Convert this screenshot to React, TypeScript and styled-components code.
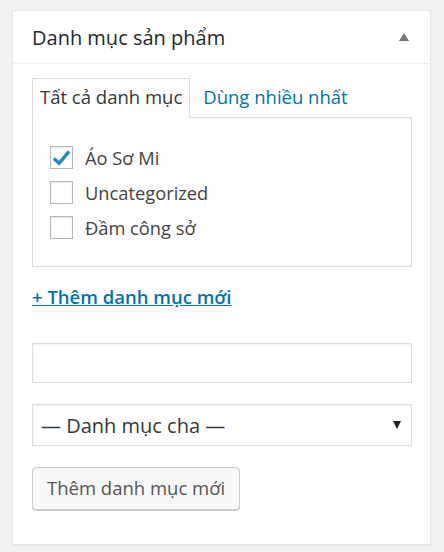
import { createGlobalStyle, styled } from "styled-components";

const GlobalStyle = createGlobalStyle`
  html, body {
    margin: 0;
    padding: 0;
    background: #f1f1f1;
  }
  body {
    font-family: "Open Sans", "Liberation Sans", sans-serif;
    color: #444;
  }
`;

const Page = styled.div`
  padding: 10px 13px 6px 12px;
`;

const Postbox = styled.div`
  background: #fff;
  border: 1px solid #e5e5e5;
  box-shadow: 0 1px 1px rgba(0, 0, 0, 0.04);
`;

const Header = styled.div`
  display: flex;
  align-items: center;
  justify-content: space-between;
  height: 52px;
  padding: 0 21px 0 19px;
  border-bottom: 1px solid #eee;
`;

const Title = styled.h2`
  margin: 0;
  font-size: 20px;
  font-weight: 400;
  color: #23282d;
`;

const Toggle = styled.span`
  width: 0;
  height: 0;
  border-left: 5px solid transparent;
  border-right: 5px solid transparent;
  border-bottom: 8px solid #72777c;
`;

const Inside = styled.div`
  padding: 14px 18px 34px 19px;
`;

const Tabs = styled.ul`
  display: flex;
  margin: 0;
  padding: 0;
  list-style: none;
`;

const Tab = styled.li<{ $active?: boolean }>`
  padding: 0 7px;
  height: 38px;
  line-height: 36px;
  font-size: 18.5px;
  margin-bottom: -1px;
  border: 1px solid ${(p) => (p.$active ? "#ddd" : "transparent")};
  border-bottom-color: ${(p) => (p.$active ? "#fdfdfd" : "transparent")};
  background: ${(p) => (p.$active ? "#fdfdfd" : "transparent")};
  color: ${(p) => (p.$active ? "#32373c" : "#0073aa")};
  position: relative;
  z-index: 1;
  & + & {
    padding-left: 12px;
  }
`;

const TabPanel = styled.div`
  border: 1px solid #ddd;
  background: #fdfdfd;
  padding: 28px 17px 27px 17px;
  display: flex;
  flex-direction: column;
  gap: 12px;
`;

const Row = styled.label`
  display: flex;
  align-items: center;
  gap: 12px;
  font-size: 18.3px;
  color: #444;
  height: 23px;
`;

const Box = styled.span`
  width: 21px;
  height: 21px;
  border: 1px solid #b4b9be;
  background: #fff;
  box-shadow: inset 0 1px 2px rgba(0, 0, 0, 0.1);
  display: flex;
  align-items: center;
  justify-content: center;
  flex-shrink: 0;
`;

const AddLink = styled.a`
  display: inline-block;
  margin-top: 17px;
  font-size: 18.5px;
  font-weight: 600;
  color: #0073aa;
  text-decoration: underline;
`;

const Form = styled.div`
  display: flex;
  flex-direction: column;
  align-items: flex-start;
  gap: 21px;
  margin-top: 34px;
`;

const TextInput = styled.input`
  box-sizing: border-box;
  width: 100%;
  height: 40px;
  margin: 0;
  border: 1px solid #ddd;
  box-shadow: inset 0 1px 2px rgba(0, 0, 0, 0.07);
  background: #fff;
  font: inherit;
`;

const Select = styled.div`
  box-sizing: border-box;
  width: 100%;
  height: 42px;
  border: 1px solid #ddd;
  box-shadow: inset 0 1px 2px rgba(0, 0, 0, 0.07);
  background: #fff;
  display: flex;
  align-items: center;
  justify-content: space-between;
  padding: 0 10px 0 8px;
  font-size: 20px;
  color: #32373c;
`;

const Arrow = styled.span`
  width: 0;
  height: 0;
  border-left: 4px solid transparent;
  border-right: 4px solid transparent;
  border-top: 8px solid #222;
`;

const Button = styled.button`
  box-sizing: border-box;
  height: 43px;
  padding: 0 14px 2px;
  border: 1px solid #ccc;
  border-radius: 4px;
  background: #f7f7f7;
  box-shadow: 0 1px 0 #ccc;
  font-family: inherit;
  font-size: 18.5px;
  color: #555;
`;

const Check = () => (
  <svg width="22" height="22" viewBox="0 0 22 22">
    <path d="M3 11.5l5.5 5L19 4" fill="none" stroke="#1e8cbe" strokeWidth="3.6" />
  </svg>
);

const items = [
  { name: "Áo Sơ Mi", checked: true },
  { name: "Uncategorized", checked: false },
  { name: "Đầm công sở", checked: false },
];

export default function App() {
  return (
    <Page>
      <GlobalStyle />
      <Postbox>
        <Header>
          <Title>Danh mục sản phẩm</Title>
          <Toggle />
        </Header>
        <Inside>
          <Tabs>
            <Tab $active>Tất cả danh mục</Tab>
            <Tab>Dùng nhiều nhất</Tab>
          </Tabs>
          <TabPanel>
            {items.map((it) => (
              <Row key={it.name}>
                <Box>{it.checked && <Check />}</Box>
                {it.name}
              </Row>
            ))}
          </TabPanel>
          <AddLink href="#">+ Thêm danh mục mới</AddLink>
          <Form>
            <TextInput type="text" />
            <Select>
              — Danh mục cha —
              <Arrow />
            </Select>
            <Button>Thêm danh mục mới</Button>
          </Form>
        </Inside>
      </Postbox>
    </Page>
  );
}
